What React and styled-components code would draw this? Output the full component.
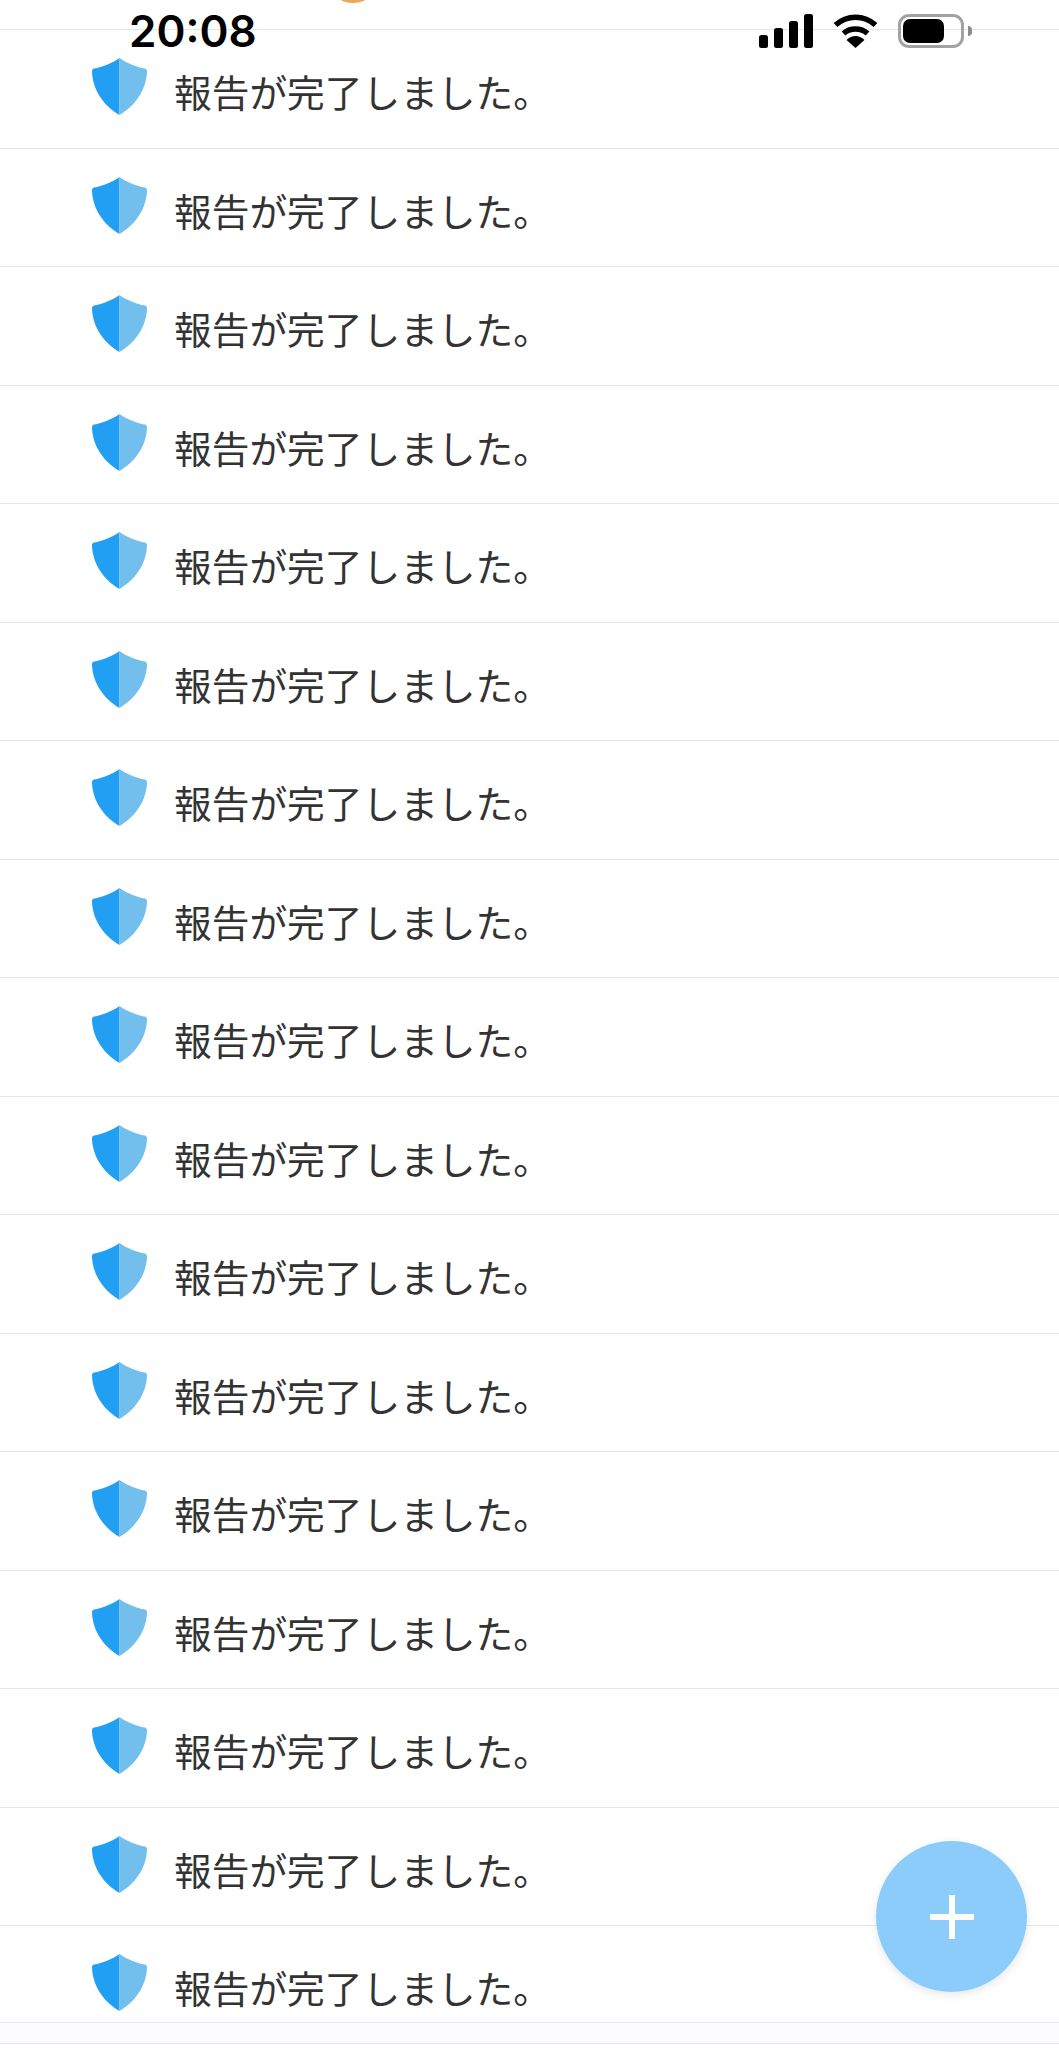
import styled, { createGlobalStyle } from "styled-components";

const rows = Array.from({ length: 17 }, (_, i) => i);

const GlobalStyle = createGlobalStyle`
  html, body {
    margin: 0;
    padding: 0;
    background: #fff;
  }
`;

const Shield = () => (
  <ShieldIcon viewBox="0 0 55 57">
    <path
      d="M27.5 0 C20 5.5 10 9 2.2 10.6 C0.8 10.9 0 12 0 13.5 C0.5 32 12 48 27.5 57 Z"
      fill="#219FF3"
    />
    <path
      d="M27.5 0 C35 5.5 45 9 52.8 10.6 C54.2 10.9 55 12 55 13.5 C54.5 32 43 48 27.5 57 Z"
      fill="#72BFEE"
    />
  </ShieldIcon>
);

const App = () => {
  return (
    <Page>
      <GlobalStyle />
      <Notch />
      <StatusBar>
        <Clock>20:08</Clock>
        <StatusIcons>
          <svg width="54" height="34" viewBox="0 0 54 34">
            <rect x="0" y="21" width="9" height="13" rx="2.5" fill="#000" />
            <rect x="15" y="14" width="9" height="20" rx="2.5" fill="#000" />
            <rect x="30" y="7" width="9" height="27" rx="2.5" fill="#000" />
            <rect x="45" y="0" width="9" height="34" rx="2.5" fill="#000" />
          </svg>
          <svg width="45" height="34" viewBox="0 0 45 34">
            <path
              d="M2.5 11 C14 0.5 31 0.5 42.5 11"
              fill="none"
              stroke="#000"
              strokeWidth="5.5"
            />
            <path
              d="M10.5 19.5 C17 13.5 28 13.5 34.5 19.5"
              fill="none"
              stroke="#000"
              strokeWidth="5.5"
            />
            <path d="M13.5 26 C19 20.5 26 20.5 31.5 26 L22.5 34 Z" fill="#000" />
          </svg>
          <Battery>
            <BatteryFill />
          </Battery>
        </StatusIcons>
      </StatusBar>

      <List>
        {rows.map((i) => (
          <Row key={i}>
            <Shield />
            <RowText>報告が完了しました。</RowText>
          </Row>
        ))}
      </List>
      <BottomBar />

      <Fab aria-label="追加">
        <svg width="44" height="44" viewBox="0 0 44 44">
          <path d="M22 0 V44 M0 22 H44" stroke="#fff" strokeWidth="6" />
        </svg>
      </Fab>
    </Page>
  );
};

const Page = styled.div`
  position: relative;
  width: 1059px;
  height: 2048px;
  padding-top: 29px;
  box-sizing: border-box;
  overflow: hidden;
  background: #fff;
  font-family: "Noto Sans CJK JP", "Noto Sans", sans-serif;
`;

const Notch = styled.div`
  position: absolute;
  top: -11px;
  left: 338px;
  width: 30px;
  height: 14px;
  border-radius: 50%;
  background: #eba65a;
  filter: blur(0.6px);
`;

const StatusBar = styled.div`
  position: absolute;
  top: 0;
  left: 0;
  right: 0;
  height: 62px;
  z-index: 2;
  display: flex;
  align-items: center;
  justify-content: space-between;
  padding: 0 95px 0 129px;
`;

const Clock = styled.div`
  font-family: Inter, "Liberation Sans", sans-serif;
  font-size: 44px;
  line-height: 50px;
  font-weight: 600;
  color: #000;
`;

const StatusIcons = styled.div`
  display: flex;
  align-items: center;
  gap: 20px;
`;

const Battery = styled.div`
  position: relative;
  width: 66px;
  height: 34px;
  box-sizing: border-box;
  border: 3px solid #a2a2a2;
  border-radius: 11px;
  padding: 2px;

  &::after {
    content: "";
    position: absolute;
    right: -11px;
    top: 9px;
    width: 4px;
    height: 10px;
    border-radius: 0 4px 4px 0;
    background: #8c8c8c;
  }
`;

const BatteryFill = styled.div`
  width: 41px;
  height: 100%;
  border-radius: 7px;
  background: #000;
`;

const List = styled.div`
  display: flex;
  flex-direction: column;
`;

const Row = styled.div`
  display: flex;
  align-items: flex-start;
  gap: 27px;
  height: 118.5px;
  box-sizing: border-box;
  padding: 28px 0 0 92px;
  border-top: 1px solid #e4e5e9;

  &:last-child {
    height: 97px;
  }
`;

const ShieldIcon = styled.svg`
  flex: none;
  width: 55px;
  height: 57px;
`;

const RowText = styled.div`
  margin-top: 10px;
  font-size: 37.7px;
  line-height: 46px;
  font-weight: 400;
  color: #333;
  white-space: nowrap;
`;

const BottomBar = styled.div`
  height: 22px;
  box-sizing: border-box;
  border-top: 1px solid #e9e9ec;
  border-bottom: 1px solid #e9e9ec;
  background: #fcfbfd;
`;

const Fab = styled.button`
  position: absolute;
  left: 876px;
  top: 1841px;
  width: 151px;
  height: 151px;
  padding: 0;
  border: 0;
  border-radius: 50%;
  display: flex;
  align-items: center;
  justify-content: center;
  background: rgba(130, 200, 250, 0.93);
  box-shadow: 0 3px 8px rgba(120, 120, 120, 0.18);
`;

export default App;
